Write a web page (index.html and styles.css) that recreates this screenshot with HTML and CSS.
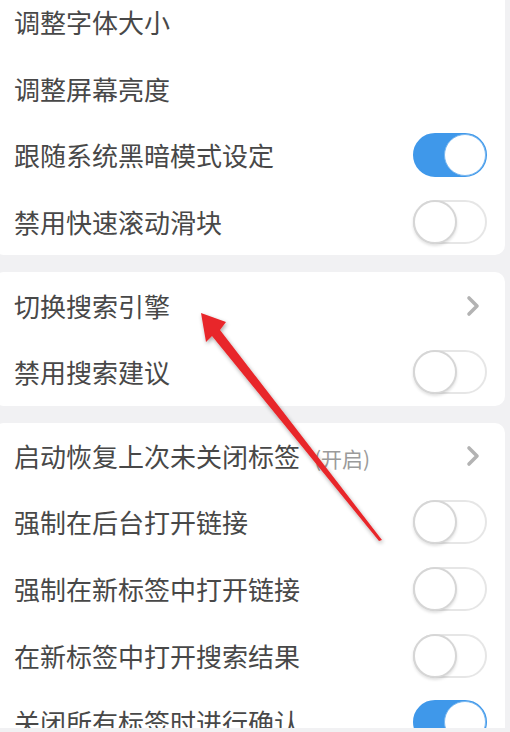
FILE: index.html
```html
<!DOCTYPE html>
<html lang="zh-CN">
<head>
<meta charset="utf-8">
<link rel="stylesheet" href="styles.css">
</head>
<body>
<div class="screen">
  <div class="card first">
    <div class="row"><span class="label">调整字体大小</span></div>
    <div class="row"><span class="label">调整屏幕亮度</span></div>
    <div class="row"><span class="label">跟随系统黑暗模式设定</span><span class="toggle on"><span class="knob"></span></span></div>
    <div class="row"><span class="label">禁用快速滚动滑块</span><span class="toggle"><span class="knob"></span></span></div>
  </div>
  <div class="card">
    <div class="row"><span class="label">切换搜索引擎</span><svg class="chev" viewBox="0 0 16 22"><path d="M4 3 L12 11 L4 19" fill="none" stroke="#b3b3b3" stroke-width="3.6" stroke-linecap="round" stroke-linejoin="round"/></svg></div>
    <div class="row"><span class="label">禁用搜索建议</span><span class="toggle"><span class="knob"></span></span></div>
  </div>
  <div class="card">
    <div class="row"><span class="label">启动恢复上次未关闭标签<span class="note">(开启)</span></span><svg class="chev" viewBox="0 0 16 22"><path d="M4 3 L12 11 L4 19" fill="none" stroke="#b3b3b3" stroke-width="3.6" stroke-linecap="round" stroke-linejoin="round"/></svg></div>
    <div class="row"><span class="label">强制在后台打开链接</span><span class="toggle"><span class="knob"></span></span></div>
    <div class="row"><span class="label">强制在新标签中打开链接</span><span class="toggle"><span class="knob"></span></span></div>
    <div class="row"><span class="label">在新标签中打开搜索结果</span><span class="toggle"><span class="knob"></span></span></div>
    <div class="row"><span class="label">关闭所有标签时进行确认</span><span class="toggle on"><span class="knob"></span></span></div>
  </div>
  <svg class="arrow" width="510" height="732" viewBox="0 0 510 732">
    <defs>
      <filter id="sh" x="-20%" y="-20%" width="140%" height="140%">
        <feGaussianBlur in="SourceAlpha" stdDeviation="2"/>
        <feOffset dx="1" dy="2"/>
        <feComponentTransfer><feFuncA type="linear" slope="0.35"/></feComponentTransfer>
        <feMerge><feMergeNode/><feMergeNode in="SourceGraphic"/></feMerge>
      </filter>
    </defs>
    <polygon filter="url(#sh)" fill="#e8272b" points="201,313 226,322 220,330 382,540 379,541 212,336 206,342"/>
  </svg>
</div>
</body>
</html>
```

FILE: styles.css
```css
html, body {
  margin: 0;
  padding: 0;
}
body {
  background: #f1f1f3;
  font-family: "Noto Sans CJK SC", "Noto Sans", sans-serif;
}
.screen {
  position: relative;
  width: 510px;
  height: 728px;
  overflow: hidden;
  display: flex;
  flex-direction: column;
  gap: 17px;
}
.card {
  background: #ffffff;
  border-radius: 10px;
  margin: 0 5px 0 -6px;
  flex-shrink: 0;
}
.card.first {
  margin-top: -11px;
}
.row {
  height: 66.6px;
  display: flex;
  align-items: center;
  justify-content: space-between;
  padding: 0 18px 0 20px;
}
.label {
  font-size: 26px;
  color: #484848;
  line-height: 1;
  white-space: nowrap;
}
.note {
  font-size: 21px;
  color: #9b9b9b;
  margin-left: 14px;
}
.chev {
  width: 16px;
  height: 22px;
  margin-right: 6px;
}
.toggle {
  position: relative;
  width: 74px;
  height: 44px;
  box-sizing: border-box;
  border-radius: 22px;
  border: 2px solid #e6e6e6;
  background: #ffffff;
}
.toggle .knob {
  position: absolute;
  top: -2px;
  left: -2px;
  width: 44px;
  height: 44px;
  box-sizing: border-box;
  border-radius: 50%;
  background: #ffffff;
  border: 2px solid #d6d6d6;
  box-shadow: 0 2px 3px rgba(0, 0, 0, 0.12);
}
.toggle.on {
  background: #3f98ea;
  border-color: #3f98ea;
}
.toggle.on .knob {
  left: auto;
  right: -1px;
  top: -1px;
  width: 42px;
  height: 42px;
  border: 1px solid #7ab8f0;
  box-shadow: none;
}
.arrow {
  position: absolute;
  left: 0;
  top: 0;
  pointer-events: none;
}
```
